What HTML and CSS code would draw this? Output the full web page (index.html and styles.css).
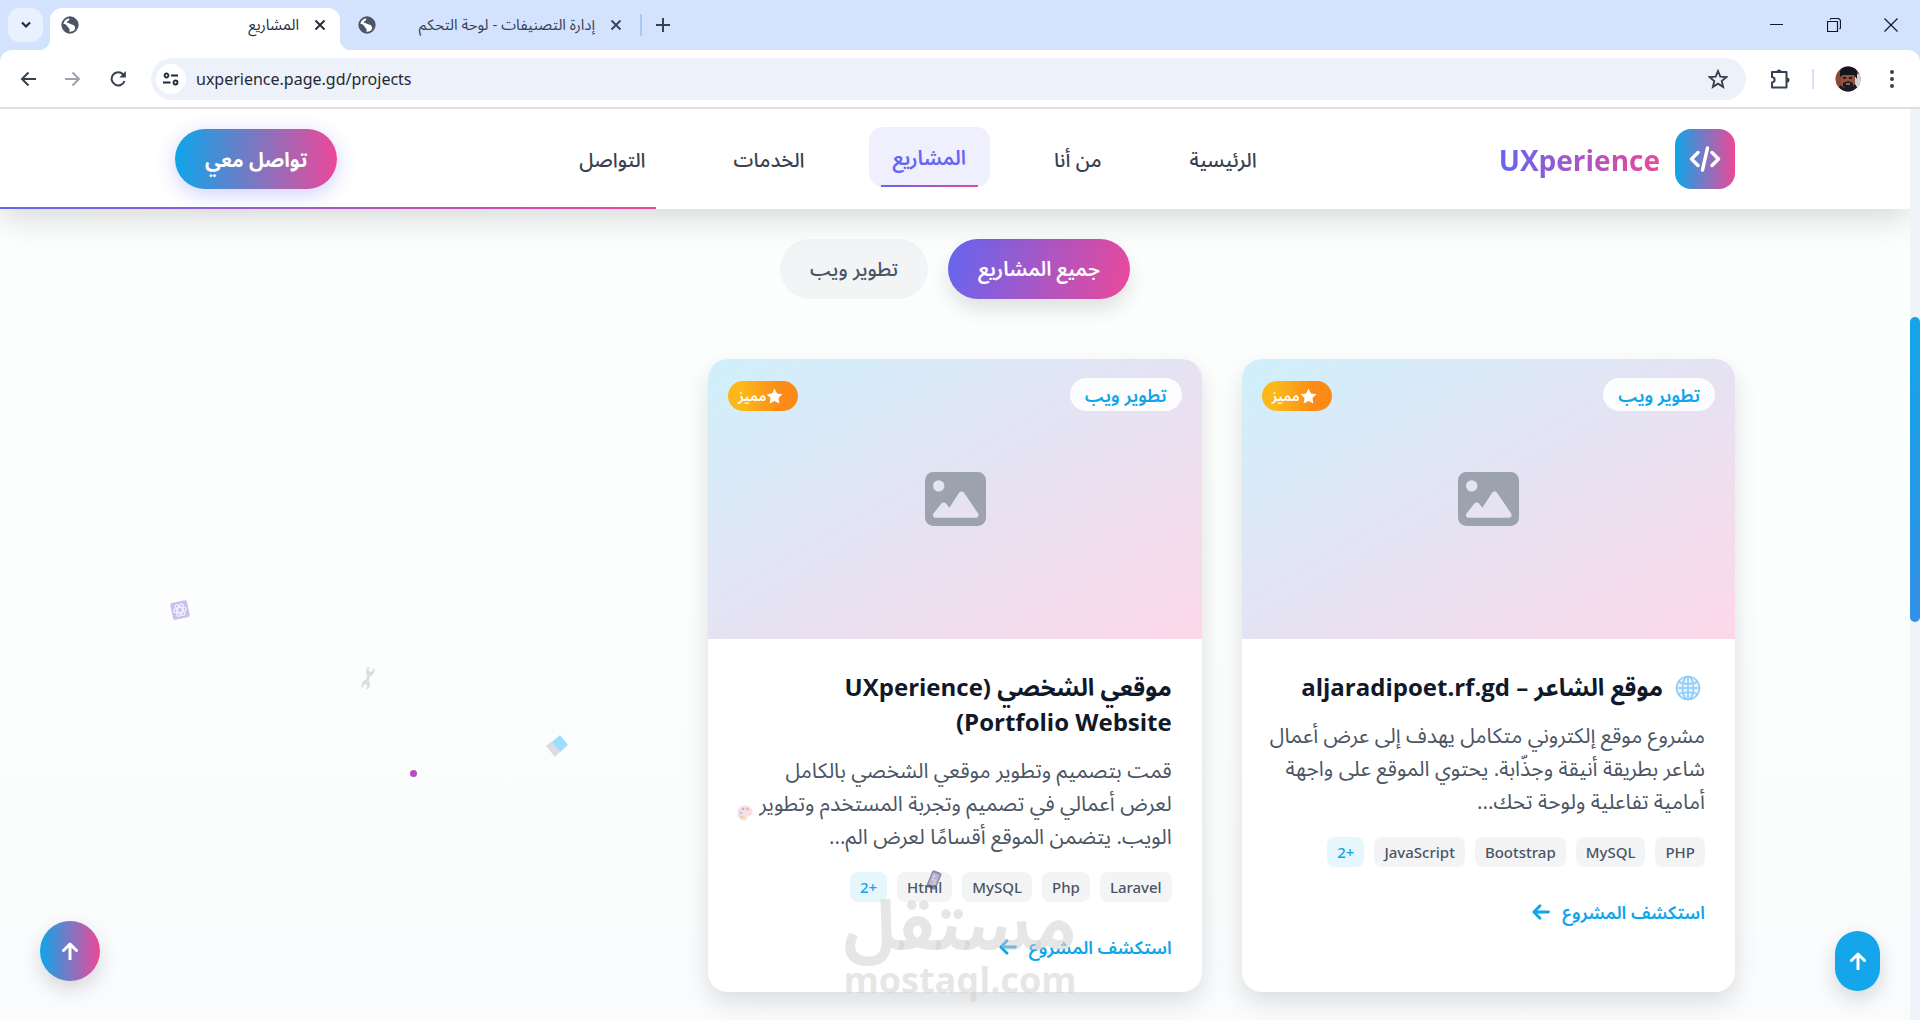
FILE: index.html
```html
<!DOCTYPE html>
<html lang="ar">
<head>
    <meta charset="UTF-8">
    <title>المشاريع</title>
    <link rel="stylesheet" href="styles.css">
</head>
<body>
    <!-- shared shapes -->
    <svg class="defs" aria-hidden="true">
        <symbol id="globe" viewBox="0 0 20 20">
            <circle cx="10" cy="10" r="8.6" fill="#fff" stroke="#4b5563" stroke-width="2"/>
            <path d="M2 9c3 0 4 .5 5 2.500s2 1.500 2.500 3.500c.3 1.500-.5 2.500-.5 3.500C5 18 1.500 14 2 9z" fill="#4b5563"/>
            <path d="M7 2c2 0 3 1 2 2.500S6 6 7 7.500s3 .5 4 1.500 3 .5 4 2 1 3-.5 5c4-2 5-8 2-11.500C14 1 10 .5 7 2z" fill="#4b5563"/>
        </symbol>
        <symbol id="close" viewBox="0 0 12 12"><path d="M1.500 1.500l9 9M10.500 1.500l-9 9" stroke="currentColor" stroke-width="1.800" fill="none"/></symbol>
        <symbol id="arrow-up" viewBox="0 0 16 18"><path d="M8 17V2M1.500 8.500L8 2l6.500 6.500" fill="none" stroke="currentColor" stroke-width="3" stroke-linecap="round" stroke-linejoin="round"/></symbol>
        <symbol id="arrow-left" viewBox="0 0 18 16"><path d="M16.500 8H2M8 1.800L1.800 8 8 14.200" fill="none" stroke="currentColor" stroke-width="2.800" stroke-linecap="round" stroke-linejoin="round"/></symbol>
        <symbol id="image" viewBox="0 0 60 53">
            <path fill-rule="evenodd" fill="currentColor" d="M8 0h44a8 8 0 0 1 8 8v37a8 8 0 0 1-8 8H8a8 8 0 0 1-8-8V8a8 8 0 0 1 8-8zm5.500 8a5.600 5.600 0 1 0 0 11.200a5.600 5.600 0 0 0 0-11.200zM36 19c-1 0-1.800.5-2.300 1.200L24 35l-3.500-4.200c-1.200-1.300-3-1.300-4.200 0L8.500 40.500c-1.500 2-.3 4.500 2 4.500h39.500c2.300 0 3.500-2.500 2.300-4.300L38.200 20.200C37.700 19.500 37 19 36 19z"/>
        </symbol>
        <symbol id="star" viewBox="0 0 18 17"><path d="M9 .6l2.600 5.200 5.800.9-4.200 4 1 5.800L9 13.800l-5.200 2.700 1-5.800-4.200-4 5.800-.9z" fill="currentColor"/></symbol>
    </svg>

    <div class="browser">
        <div class="tab-strip">
            <button class="tab-search" aria-label="Search tabs">
                <svg width="12" height="8" viewBox="0 0 12 8"><path d="M2 1.500l4 4 4-4" fill="none" stroke="#1f2937" stroke-width="2.200"/></svg>
            </button>
            <div class="tab active">
                <svg class="favicon"><use href="#globe"/></svg>
                <span class="tab-title">المشاريع</span>
                <button class="tab-close" aria-label="Close"><svg width="12" height="12"><use href="#close"/></svg></button>
            </div>
            <div class="tab">
                <svg class="favicon"><use href="#globe"/></svg>
                <span class="tab-title">إدارة التصنيفات - لوحة التحكم</span>
                <button class="tab-close" aria-label="Close"><svg width="12" height="12"><use href="#close"/></svg></button>
            </div>
            <button class="new-tab" aria-label="New tab">
                <svg width="14" height="14" viewBox="0 0 14 14"><path d="M7 0v14M0 7h14" stroke="#374151" stroke-width="2"/></svg>
            </button>
            <div class="window-controls">
                <button aria-label="Minimize"><svg width="14" height="14"><path d="M0 6.500h13" stroke="#111827"/></svg></button>
                <button aria-label="Restore"><svg width="14" height="14"><path d="M.5 3.500h10v10h-10zM3 1.500c.3-.7.800-1 1.500-1h6a3 3 0 0 1 3 3v6c0 .7-.3 1.200-1 1.500" fill="none" stroke="#111827" stroke-width="1.200"/></svg></button>
                <button aria-label="Close window"><svg width="14" height="14"><path d="M.5.5l13 13M13.500.5l-13 13" stroke="#111827" stroke-width="1.200"/></svg></button>
            </div>
        </div>
        <div class="toolbar">
            <button class="tool" aria-label="Back"><svg width="16" height="16" viewBox="0 0 16 16"><path d="M16 8H2M8.500 1.500L2 8l6.500 6.500" fill="none" stroke="#374151" stroke-width="2"/></svg></button>
            <button class="tool" aria-label="Forward"><svg width="16" height="16" viewBox="0 0 16 16"><path d="M0 8h14M7.500 1.500L14 8l-6.500 6.500" fill="none" stroke="#9ca3af" stroke-width="2"/></svg></button>
            <button class="tool" aria-label="Reload"><svg width="16" height="16" viewBox="0 0 16 16"><path d="M14.500 10A6.600 6.600 0 1 1 13 3.300L15 5.500" fill="none" stroke="#374151" stroke-width="2"/><path d="M15.800 0v6.500H9.300z" fill="#374151"/></svg></button>
            <div class="address">
                <button class="site-info" aria-label="Site information">
                    <svg width="16" height="14" viewBox="0 0 16 14"><g fill="none" stroke="#1f2937" stroke-width="1.800"><circle cx="3.500" cy="3.500" r="2"/><path d="M8 3.500h7M0 10.500h7.500"/><circle cx="12.500" cy="10.500" r="2"/></g></svg>
                </button>
                <label class="hidden-label" for="url">Address</label>
                <input class="url" id="url" type="text" value="uxperience.page.gd/projects">
                <button class="tool" aria-label="Bookmark"><svg width="20" height="20" viewBox="0 0 20 20"><path d="M10 2l2.300 5.600 6 .5-4.600 3.900 1.400 5.900L10 14.700l-5.100 3.200L6.300 12 1.700 8.100l6-.5z" fill="none" stroke="#374151" stroke-width="1.900"/></svg></button>
            </div>
            <button class="tool extensions" aria-label="Extensions"><svg width="22" height="22" viewBox="0 0 22 22"><path d="M3 4h14.500v15.500H3v-5c3.500-.5 3.500-5 0-5.500z" fill="none" stroke="#374151" stroke-width="2" stroke-linejoin="round"/><path d="M7.500 4a2.500 2.500 0 0 1 5 0zM18 9.500a2.500 2.500 0 0 1 0 5z" fill="#374151"/></svg></button>
            <span class="divider"></span>
            <button class="tool" aria-label="Profile">
                <svg width="26" height="26" viewBox="0 0 26 26">
                    <clipPath id="face"><circle cx="13" cy="13" r="12.500"/></clipPath>
                    <g clip-path="url(#face)">
                        <path d="M0 0h26v26H0z" fill="#8a4a35"/>
                        <path d="M19 8h7v18h-7z" fill="#d8d0d8"/>
                        <path d="M6 7h14v12l-4 4h-6l-4-4z" fill="#8f5340"/>
                        <path d="M5 11V5l4-5h9l4 5v8l-3-4H8z" fill="#15151f"/>
                        <path d="M2 26l3-7 4 3h7l4-4 5 8zM8 17l5-2 5 2v4l-5 2-5-2z" fill="#1c1a26"/>
                        <path d="M11 17h4v2h-4z" fill="#a35f45"/>
                        <path d="M8 11h3v2H8zM14 11h3v2h-3z" fill="#2b1a1a"/>
                    </g>
                </svg>
            </button>
            <button class="tool" aria-label="Menu"><svg width="4" height="20" viewBox="0 0 4 20"><g fill="#374151"><circle cx="2" cy="3" r="2"/><circle cx="2" cy="10" r="2"/><circle cx="2" cy="17" r="2"/></g></svg></button>
        </div>
    </div>

    <div class="viewport">
        <div class="page" dir="rtl">
            <header class="site-header">
                <div class="container header-row">
                    <a class="logo" href="#">
                        <span class="logo-icon">
                            <svg width="32" height="26" viewBox="0 0 32 26"><path d="M9 6.500L2.500 13 9 19.500M23 6.500l6.500 6.500-6.500 6.500M18.500 2l-5 22" fill="none" stroke="#fff" stroke-width="3.400" stroke-linecap="round" stroke-linejoin="round"/></svg>
                        </span>
                        <span class="logo-text">UXperience</span>
                    </a>
                    <nav class="nav">
                        <a href="#">الرئيسية</a>
                        <a href="#">من أنا</a>
                        <a class="active" href="#">المشاريع</a>
                        <a href="#">الخدمات</a>
                        <a href="#">التواصل</a>
                    </nav>
                    <a class="contact-btn" href="#">تواصل معي</a>
                </div>
                <div class="scroll-progress"></div>
            </header>

            <main class="container">
                <div class="filters">
                    <button class="filter active">جميع المشاريع</button>
                    <button class="filter">تطوير ويب</button>
                </div>

                <div class="projects">
                    <article class="card">
                        <div class="card-image">
                            <svg class="placeholder"><use href="#image"/></svg>
                            <span class="category">تطوير ويب</span>
                            <span class="featured"><svg width="17" height="16"><use href="#star"/></svg>مميز</span>
                        </div>
                        <div class="card-body">
                            <h3><svg class="title-globe" viewBox="0 0 26 26"><g fill="none" stroke="#8ccbf8" stroke-width="1.500"><circle cx="13" cy="13" r="11.500" fill="#e3f2fd"/><ellipse cx="13" cy="13" rx="5.500" ry="11.500"/><path d="M13 1.500v23M1.500 13h23M3.500 7c5 2.500 14 2.500 19 0M3.500 19c5-2.500 14-2.500 19 0"/></g></svg>موقع الشاعر – aljaradipoet.rf.gd</h3>
                            <p>مشروع موقع إلكتروني متكامل يهدف إلى عرض أعمال شاعر بطريقة أنيقة وجذّابة. يحتوي الموقع على واجهة أمامية تفاعلية ولوحة تحك...</p>
                            <ul class="tags">
                                <li>PHP</li>
                                <li>MySQL</li>
                                <li>Bootstrap</li>
                                <li>JavaScript</li>
                                <li class="more">+2</li>
                            </ul>
                            <a class="explore" href="#">استكشف المشروع <svg width="18" height="16"><use href="#arrow-left"/></svg></a>
                        </div>
                    </article>

                    <article class="card">
                        <div class="card-image">
                            <svg class="placeholder"><use href="#image"/></svg>
                            <span class="category">تطوير ويب</span>
                            <span class="featured"><svg width="17" height="16"><use href="#star"/></svg>مميز</span>
                        </div>
                        <div class="card-body">
                            <h3>موقعي الشخصي (UXperience Portfolio Website)</h3>
                            <p>قمت بتصميم وتطوير موقعي الشخصي بالكامل لعرض أعمالي في تصميم وتجربة المستخدم وتطوير الويب. يتضمن الموقع أقسامًا لعرض الم...</p>
                            <ul class="tags">
                                <li>Laravel</li>
                                <li>Php</li>
                                <li>MySQL</li>
                                <li>Html</li>
                                <li class="more">+2</li>
                            </ul>
                            <a class="explore" href="#">استكشف المشروع <svg width="18" height="16"><use href="#arrow-left"/></svg></a>
                        </div>
                    </article>
                </div>
            </main>

            <!-- floating decorations -->
            <svg class="particle atom" viewBox="0 0 20 20"><g transform="rotate(-12 10 10)"><rect x="1.500" y="1.500" width="17" height="17" rx="2" fill="#c9c0ee"/><g fill="none" stroke="#f4f1fd" stroke-width="1.200"><ellipse cx="10" cy="10" rx="6.500" ry="2.600"/><ellipse cx="10" cy="10" rx="6.500" ry="2.600" transform="rotate(60 10 10)"/><ellipse cx="10" cy="10" rx="6.500" ry="2.600" transform="rotate(120 10 10)"/></g></g></svg>
            <svg class="particle wrench" viewBox="0 0 14 22"><g transform="rotate(18 7 11)" fill="#dcdde0"><path d="M5.500 6h3v10h-3z"/><path d="M3 1v3.500a4 4 0 0 0 8 0V1L8.800 0v4H5.200V0zM3 21v-3.500a4 4 0 0 1 8 0V21l-2.200 1v-4H5.200v4z"/></g></svg>
            <svg class="particle laptop" viewBox="0 0 24 24"><path d="M1 12l6-5 8 11-5 5z" fill="#dcdde0"/><path d="M7 8l8-7 8 10-8 7z" fill="#9fdcfd"/></svg>
            <span class="particle dot"></span>
            <svg class="particle palette" viewBox="0 0 16 16"><path d="M8 .5C3 .5 0 4 .5 9S5 16 8 15.500s1-4 3.500-4.500 4-1 4-4S12.500.5 8 .5z" fill="#f7dfe0"/><circle cx="4" cy="8" r="1.300" fill="#a8c8f4"/><circle cx="6" cy="4" r="1.300" fill="#c9a8e8"/><circle cx="10.500" cy="4" r="1.300" fill="#f4a8a8"/><circle cx="5" cy="12" r="1.300" fill="#f7c98c"/></svg>
            <svg class="particle phone" viewBox="0 0 18 20"><g transform="rotate(22 9 10)" opacity=".6"><rect x="4" y="1" width="10" height="18" rx="2" fill="#4b4a6a"/><rect x="5.500" y="3" width="7" height="13" fill="#9a86c8"/><path d="M6 5h3v3H6zM9 12h3v3H9z" fill="#7cc0ee"/><path d="M6.500 9h5v2h-5z" fill="#f0b070"/></g></svg>

            <div class="watermark" aria-hidden="true">
                <span class="watermark-ar">مستقل</span>
                <span class="watermark-en" dir="ltr">mostaql.com</span>
            </div>

            <button class="float-btn round" aria-label="للأعلى"><svg width="16" height="18"><use href="#arrow-up"/></svg></button>
            <button class="float-btn pill" aria-label="للأعلى"><svg width="16" height="18"><use href="#arrow-up"/></svg></button>
        </div>
        <div class="scrollbar">
            <div class="scroll-thumb"></div>
        </div>
    </div>
</body>
</html>
```
FILE: styles.css
```css
* {
    margin: 0;
    padding: 0;
    box-sizing: border-box;
}
body {
    font-family: "Open Sans", "Noto Sans Arabic", "DejaVu Sans", sans-serif;
    height: 100vh;
    display: flex;
    flex-direction: column;
    overflow: hidden;
    background: #fff;
}
button {
    border: none;
    background: none;
    font-family: inherit;
    cursor: pointer;
}
a {
    text-decoration: none;
}
svg {
    display: block;
    flex-shrink: 0;
}
.defs {
    position: absolute;
    width: 0;
    height: 0;
}

/* Browser window */
.browser {
    background: #d3e2fd;
    border-bottom: 2px solid #dfdfdf;
}
.tab-strip {
    display: flex;
    align-items: center;
    height: 50px;
    padding-left: 8px;
}
.tab-search {
    width: 35px;
    height: 34px;
    border-radius: 12px;
    background: #e9f1fe;
    display: flex;
    align-items: center;
    justify-content: center;
    margin-right: 7px;
}
.tab {
    display: flex;
    align-items: center;
    gap: 15px;
    height: 42px;
    width: 290px;
    padding: 0 8px 0 18px;
    margin-right: 10px;
    color: #374151;
}
.tab.active {
    position: relative;
    margin-right: 0;
    padding: 0 14px 8px 11px;
    background: #fff;
    border-radius: 12px 12px 0 0;
    align-self: flex-end;
    color: #1f2937;
}
.tab.active::before,
.tab.active::after {
    content: "";
    position: absolute;
    bottom: 0;
    width: 12px;
    height: 12px;
}
.tab.active::before {
    left: -12px;
    background: radial-gradient(circle at 0 0, #d3e2fd 12px, #fff 13px);
}
.tab.active::after {
    right: -12px;
    background: radial-gradient(circle at 100% 0, #d3e2fd 12px, #fff 13px);
}
.favicon {
    width: 18px;
    height: 18px;
}
.tab-title {
    flex: 1;
    text-align: right;
    font-size: 15px;
    direction: rtl;
    white-space: nowrap;
}
.tab-close {
    color: inherit;
}
.new-tab {
    padding: 4px 14px;
    border-left: 2px solid #a8c7fa;
}
.window-controls {
    display: flex;
    gap: 43px;
    margin-left: auto;
    padding-right: 22px;
}
.toolbar {
    display: flex;
    align-items: center;
    gap: 29px;
    height: 57px;
    padding: 0 26px 0 20px;
    background: #fff;
    border-radius: 12px 12px 0 0;
}
.address {
    flex: 1;
    display: flex;
    align-items: center;
    gap: 10px;
    height: 42px;
    margin-left: -4px;
    padding: 0 18px 0 5px;
    border-radius: 21px;
    background: #edf1fa;
}
.site-info {
    width: 30px;
    height: 30px;
    border-radius: 50%;
    background: #fff;
    display: flex;
    align-items: center;
    justify-content: center;
}
.hidden-label {
    position: absolute;
    clip-path: inset(50%);
}
.url {
    flex: 1;
    border: none;
    background: none;
    font-family: "Noto Sans", sans-serif;
    font-size: 16px;
    color: #1f2937;
    outline: none;
}
.extensions {
    margin-left: -6px;
    margin-right: -8px;
}
.divider {
    width: 2px;
    height: 20px;
    background: #d3e2fd;
    margin-right: -8px;
}

/* Page */
.viewport {
    flex: 1;
    display: flex;
    min-height: 0;
}
.page {
    flex: 1;
    position: relative;
    overflow: hidden;
    background: linear-gradient(180deg, #fdfffe 0%, #fcfefd 60%, #fafbfc 100%);
}
.container {
    max-width: 1600px;
    margin: 0 auto;
    padding: 0 20px;
}
.site-header {
    position: relative;
    background: #fff;
    box-shadow: 0 8px 32px rgba(0, 0, 0, 0.16);
}
.header-row {
    display: flex;
    align-items: center;
    justify-content: space-between;
    height: 100px;
}
.logo {
    display: flex;
    align-items: center;
    gap: 15px;
}
.logo-icon {
    width: 60px;
    height: 60px;
    border-radius: 16px;
    background: linear-gradient(to right, #0ea5e9, #ec4899);
    display: flex;
    align-items: center;
    justify-content: center;
}
.logo-text {
    padding-top: 2px;
    font-size: 28px;
    font-weight: 700;
    background: linear-gradient(to right, #6366f1, #ec4899);
    -webkit-background-clip: text;
    background-clip: text;
    color: transparent;
}
.nav {
    display: flex;
    gap: 40px;
}
.nav a {
    position: relative;
    padding: 2px 24px 0;
    font-size: 20px;
    font-weight: 500;
    line-height: 58px;
    color: #374151;
}
.nav a.active {
    background: #f0effe;
    border-radius: 14px;
    color: #6366f1;
    font-weight: 600;
    transform: translateY(-2px);
}
.nav a.active::after {
    content: "";
    position: absolute;
    bottom: 0;
    left: 10%;
    width: 80%;
    height: 2px;
    background: linear-gradient(to right, #6366f1, #ec4899);
}
.contact-btn {
    padding: 2px 30px 0;
    line-height: 58px;
    border-radius: 30px;
    font-size: 20px;
    font-weight: 700;
    color: #fff;
    background: linear-gradient(to right, #0ea5e9, #ec4899);
    box-shadow: 0 5px 20px rgba(99, 102, 241, 0.3);
}
.scroll-progress {
    position: absolute;
    bottom: 0;
    left: 0;
    width: 34.35%;
    height: 2px;
    background: linear-gradient(to right, #6366f1, #ec4899);
}

.filters {
    display: flex;
    justify-content: center;
    gap: 20px;
    padding: 30px 0 60px;
}
.filter {
    height: 60px;
    padding: 2px 30px 0;
    border-radius: 30px;
    font-size: 20px;
    font-weight: 500;
    color: #4b5563;
    background: #f3f4f6;
}
.filter.active {
    color: #fff;
    font-weight: 600;
    background: linear-gradient(105deg, #6366f1, #ec4899);
    box-shadow: 0 10px 20px rgba(0, 0, 0, 0.12);
}

.projects {
    display: grid;
    grid-template-columns: repeat(3, 1fr);
    gap: 40px;
}
.card {
    background: #fff;
    border-radius: 20px;
    overflow: hidden;
    box-shadow: 0 10px 24px rgba(0, 0, 0, 0.12);
}
.card-image {
    position: relative;
    height: 280px;
    display: flex;
    align-items: center;
    justify-content: center;
    background: linear-gradient(150deg, #cff0fb 0%, #e3e4f4 45%, #ecdff0 65%, #fcd8e8 100%);
}
.placeholder {
    width: 61px;
    height: 54px;
    color: #9ca3af;
}
.category {
    position: absolute;
    top: 19px;
    right: 20px;
    padding: 1px 15px 0;
    border-radius: 17px;
    background: rgba(255, 255, 255, 0.9);
    color: #0ea5e9;
    font-size: 18px;
    font-weight: 600;
    line-height: 32px;
}
.featured {
    position: absolute;
    top: 22px;
    left: 20px;
    display: flex;
    align-items: center;
    padding: 0 15px 0 10px;
    border-radius: 15px;
    background: linear-gradient(to right, #fbb81a 20%, #fb8a17 75%);
    color: #fff;
    font-size: 14px;
    font-weight: 600;
    line-height: 30px;
}
.card-body {
    padding: 30px 30px 30px 24px;
}
.card h3 {
    padding-left: 6px;
    font-size: 24px;
    font-weight: 700;
    line-height: 35px;
    color: #111827;
}
.title-globe {
    display: inline-block;
    width: 26px;
    height: 26px;
    margin: 0 4px 0 12px;
    vertical-align: -5px;
}
.card p {
    margin: 15px 0 19px;
    font-size: 21px;
    line-height: 33px;
    color: #4b5563;
}
.tags {
    display: flex;
    gap: 10px;
    list-style: none;
    margin-bottom: 30px;
}
.tags li {
    padding: 0 10px;
    border-radius: 8px;
    background: #f3f4f6;
    color: #4b5563;
    font-family: "Noto Sans", sans-serif;
    font-size: 15px;
    font-weight: 500;
    line-height: 30px;
}
.tags .more {
    background: #e6f6fd;
    color: #0ea5e9;
}
.explore {
    display: inline-flex;
    align-items: center;
    gap: 12px;
    font-size: 18px;
    font-weight: 600;
    line-height: 30px;
    color: #0ea5e9;
}

/* Things that float above the page */
.particle {
    position: absolute;
}
.atom {
    left: 170px;
    top: 491px;
    width: 20px;
    height: 20px;
}
.wrench {
    left: 361px;
    top: 558px;
    width: 14px;
    height: 22px;
}
.laptop {
    left: 545px;
    top: 625px;
    width: 24px;
    height: 24px;
}
.dot {
    left: 410px;
    top: 661px;
    width: 7px;
    height: 7px;
    border-radius: 50%;
    background: #b04fbe;
}
.palette {
    left: 737px;
    top: 696px;
    width: 16px;
    height: 16px;
}
.phone {
    left: 925px;
    top: 761px;
    width: 18px;
    height: 20px;
}
.watermark {
    position: absolute;
    left: 845px;
    bottom: 20px;
    width: 230px;
    display: flex;
    flex-direction: column;
    align-items: center;
    color: rgba(205, 205, 205, 0.5);
    font-weight: 700;
    pointer-events: none;
}
.watermark-ar {
    font-family: "Noto Sans Arabic", "DejaVu Sans", sans-serif;
    font-size: 70px;
    line-height: 64px;
}
.watermark-en {
    font-family: "Open Sans", sans-serif;
    font-size: 36px;
    line-height: 40px;
}
.float-btn {
    position: absolute;
    display: flex;
    align-items: center;
    justify-content: center;
    height: 60px;
    color: #fff;
    box-shadow: 0 8px 20px rgba(0, 0, 0, 0.15);
}
.float-btn.round {
    left: 40px;
    bottom: 39px;
    width: 60px;
    border-radius: 50%;
    background: linear-gradient(to right, #0ea5e9, #ec4899);
}
.float-btn.pill {
    right: 30px;
    bottom: 29px;
    width: 45px;
    border-radius: 23px;
    background: #14a5ea;
}
.scrollbar {
    width: 10px;
    padding-top: 208px;
    background: #eff3fa;
}
.scroll-thumb {
    height: 305px;
    border-radius: 5px;
    background: linear-gradient(180deg, #12a6eb, #3390e8);
}
```
